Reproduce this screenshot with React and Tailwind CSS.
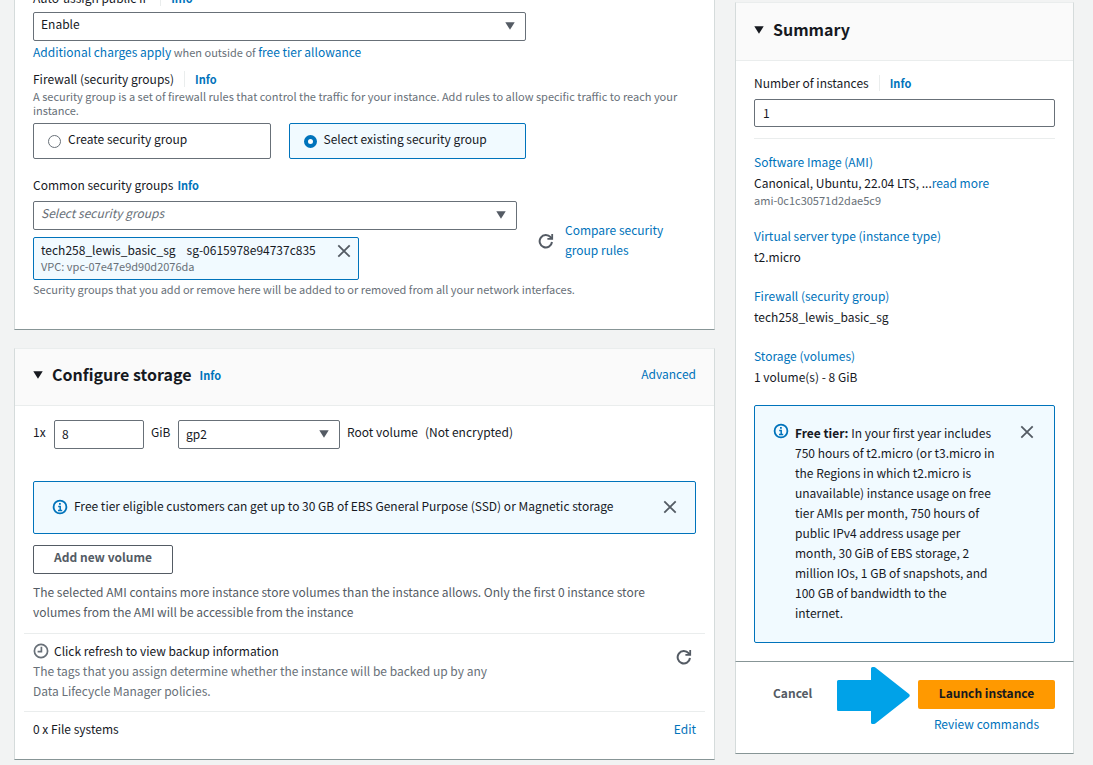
import React from "react";

function Caret({ className = "" }) {
  return (
    <svg viewBox="0 0 10 8" className={`h-2 w-2.5 shrink-0 fill-current ${className}`} aria-hidden="true">
      <path d="M0.3 0.3h9.4L5 7.8z" />
    </svg>
  );
}

function CloseIcon() {
  return (
    <svg viewBox="0 0 14 14" className="size-3.5" fill="none" stroke="#545b64" strokeWidth="1.8" aria-hidden="true">
      <path d="M1.3 1.3l11.4 11.4M12.7 1.3L1.3 12.7" />
    </svg>
  );
}

function RefreshIcon() {
  return (
    <svg viewBox="0 0 16 16" className="size-4" fill="none" stroke="#545b64" strokeWidth="2" aria-hidden="true">
      <path d="M14 9A6.200 6.200 0 1 1 12.600 4.200L14.200 5.600" />
      <path d="M14.200 1v4.900H9.400" strokeWidth="1.800" />
    </svg>
  );
}

function InfoIcon() {
  return (
    <svg viewBox="0 0 16 16" className="size-4 shrink-0" fill="none" stroke="#0073bb" aria-hidden="true">
      <circle cx="8" cy="8" r="6.4" strokeWidth="1.8" />
      <path d="M6.2 7.4h2v3.8M6 11.4h4.2" strokeWidth="1.5" />
      <path d="M7 4.9h1.8" strokeWidth="1.7" />
    </svg>
  );
}

function ClockIcon() {
  return (
    <svg viewBox="0 0 16 16" className="size-4 shrink-0" fill="none" stroke="#687078" aria-hidden="true">
      <circle cx="8" cy="8" r="6.6" strokeWidth="1.7" />
      <path d="M8.4 3.8v4.8H4.6" strokeWidth="1.7" />
    </svg>
  );
}

function Link({ children, className = "" }) {
  return (
    <a href="#" className={`text-[#0073bb] ${className}`}>
      {children}
    </a>
  );
}

function Info({ divided = false }) {
  return (
    <a
      href="#"
      className={
        divided
          ? "ml-2.5 border-l border-[#eaeded] pl-2.5 text-[11px] leading-4 font-bold text-[#0073bb]"
          : "text-[11px] leading-4 font-bold text-[#0073bb]"
      }
    >
      Info
    </a>
  );
}

function Select({ id, label, value, className = "", selectClass = "pb-1.5" }) {
  return (
    <div className={`relative ${className}`}>
      <select
        id={id}
        aria-label={label}
        className={`block h-[29px] w-full appearance-none rounded-xs border border-[#687078] bg-white pr-7 pl-[7px] ${selectClass}`}
      >
        <option>{value}</option>
      </select>
      <Caret className="pointer-events-none absolute top-2.5 right-[11px] text-[#545b64]" />
    </div>
  );
}

function Tile({ label, selected = false }) {
  return (
    <label
      className={
        selected
          ? "flex h-9 flex-1 items-center gap-[7px] rounded-xs border border-[#0073bb] bg-[#f1faff] px-3.5"
          : "flex h-9 flex-1 items-center gap-[7px] rounded-xs border border-[#687078] bg-white px-3.5"
      }
    >
      <input
        type="radio"
        name="firewall"
        defaultChecked={selected}
        className="size-[13px] appearance-none rounded-full border border-[#687078] bg-white checked:border-4 checked:border-[#0073bb]"
      />
      <span className="pb-1">{label}</span>
    </label>
  );
}

const CARD = "border border-t-[#eaeded] border-r-[#d5dbdb] border-b-[#879596] border-l-[#d5dbdb] bg-white";

function NetworkCard() {
  return (
    <section className={`${CARD} -mt-[13px] px-[18px] pb-8`}>
      <div className="flex items-center">
        <label htmlFor="public-ip">Auto-assign public IP</label>
        <Info divided />
      </div>
      <Select id="public-ip" value="Enable" className="mt-1 w-[493px]" />
      <p className="mt-px text-[11px] leading-5 text-[#687078]">
        <Link className="text-[12px]">Additional charges apply</Link> when outside of{" "}
        <Link className="text-[12px]">free tier allowance</Link>
      </p>
      <div className="mt-[7px] flex items-center">
        <span>Firewall (security groups)</span>
        <Info divided />
      </div>
      <p className="w-[655px] text-[11px] leading-[14px] text-[#687078]">
        A security group is a set of firewall rules that control the traffic for your instance. Add rules to allow
        specific traffic to reach your instance.
      </p>
      <div className="mt-1.5 flex w-[493px] gap-[18px]">
        <Tile label="Create security group" />
        <Tile label="Select existing security group" selected />
      </div>
      <div className="mt-4 flex items-center gap-1">
        <label htmlFor="groups">Common security groups</label>
        <Info />
      </div>
      <div className="mt-1.5 flex items-center">
        <div className="w-[484px]">
          <Select id="groups" value="Select security groups" selectClass="pb-1.5 italic text-[#687078]" />
          <div className="mt-[7px] flex h-[43px] w-[326px] items-start justify-between rounded-xs border border-[#0073bb] bg-[#f1faff] px-[7px] pt-[3px]">
            <div>
              <p className="flex gap-[11px] leading-[18px]">
                <span>tech258_lewis_basic_sg</span>
                <span>sg-0615978e94737c835</span>
              </p>
              <p className="text-[11px] leading-[14px] text-[#687078]">VPC: vpc-07e47e9d90d2076da</p>
            </div>
            <button type="button" aria-label="Remove security group" className="mt-[3px]">
              <CloseIcon />
            </button>
          </div>
        </div>
        <button type="button" aria-label="Refresh security groups" className="ml-[21px]">
          <RefreshIcon />
        </button>
        <Link className="ml-[11px] w-[110px] pb-0.5">Compare security group rules</Link>
      </div>
      <p className="mt-px text-[11px] leading-4 text-[#687078]">
        Security groups that you add or remove here will be added to or removed from all your network interfaces.
      </p>
    </section>
  );
}

function StorageCard() {
  return (
    <section className={CARD}>
      <header className="flex h-[57px] items-center border-b border-[#eaeded] bg-[#fafafa] px-[18px] pb-1">
        <Caret />
        <h2 className="ml-[9px] pb-0.5 text-[16px] leading-5 font-bold">Configure storage</h2>
        <span className="ml-2">
          <Info />
        </span>
        <Link className="ml-auto pb-0.5">Advanced</Link>
      </header>
      <div className="px-[18px] pt-3.5">
        <div className="flex items-start">
          <label htmlFor="size" className="w-[21px] pt-0.5">1x</label>
          <input
            id="size"
            defaultValue="8"
            className="h-[29px] w-[90px] rounded-xs border border-[#687078] px-[7px] pb-0.5"
          />
          <span className="w-[34px] pt-0.5 pl-[7px]">GiB</span>
          <Select label="Volume type" value="gp2" className="w-[162px]" selectClass="pb-0.5" />
          <span className="pt-0.5 pl-[7px]">Root volume</span>
          <span className="pt-0.5 pl-[7px]">(Not encrypted)</span>
        </div>
        <div className="mt-8 flex h-[53px] items-center rounded-xs border border-[#0073bb] bg-[#f1faff] px-[18px] pb-0.5">
          <InfoIcon />
          <p className="ml-1.5 pb-px">
            Free tier eligible customers can get up to 30 GB of EBS General Purpose (SSD) or Magnetic storage
          </p>
          <button type="button" aria-label="Dismiss" className="ml-auto">
            <CloseIcon />
          </button>
        </div>
        <button
          type="button"
          className="mt-[11px] block h-[29px] w-[140px] rounded-xs border border-[#545b64] pb-1.5 font-bold text-[#545b64]"
        >
          Add new volume
        </button>
        <p className="mt-2 w-[650px] text-[#545b64]">
          The selected AMI contains more instance store volumes than the instance allows. Only the first 0 instance
          store volumes from the AMI will be accessible from the instance
        </p>
      </div>
      <div className="mx-[9px] mt-[11px] flex items-start justify-between border-t border-[#eaeded] px-[9px] pt-[7px] pb-2.5">
        <div className="w-[475px]">
          <p className="flex items-center gap-[5px]">
            <ClockIcon />
            Click refresh to view backup information
          </p>
          <p className="text-[#687078]">
            The tags that you assign determine whether the instance will be backed up by any Data Lifecycle Manager
            policies.
          </p>
        </div>
        <button type="button" aria-label="Refresh backup information" className="mt-2 mr-1">
          <RefreshIcon />
        </button>
      </div>
      <div className="mx-[9px] flex justify-between border-t border-[#eaeded] px-[9px] pt-[7px] pb-5">
        <span>0 x File systems</span>
        <Link>Edit</Link>
      </div>
    </section>
  );
}

function SummaryItem({ title, children }) {
  return (
    <div>
      <Link className="block">{title}</Link>
      <div className="mt-px">{children}</div>
    </div>
  );
}

function Summary() {
  return (
    <aside className="mt-0.5 w-[339px] shrink-0 self-start">
      <section className={CARD}>
        <header className="flex h-[58px] items-center border-b border-[#eaeded] bg-[#fafafa] px-[18px] pb-1">
          <Caret />
          <h2 className="ml-[9px] pb-0.5 text-[16px] leading-5 font-bold">Summary</h2>
        </header>
        <div className="px-[18px] pt-3 pb-[18px]">
          <div className="flex items-center">
            <label htmlFor="count">Number of instances</label>
            <Info divided />
          </div>
          <input
            id="count"
            defaultValue="1"
            className="mt-1.5 block h-7 w-full rounded-xs border border-[#687078] px-2 pb-0.5"
          />
          <div className="mt-[11px] flex flex-col gap-[19px] border-t border-[#eaeded] pt-[13px]">
            <div>
              <Link className="block">Software Image (AMI)</Link>
              <p className="mt-px">
                Canonical, Ubuntu, 22.04 LTS, ...<Link>read more</Link>
              </p>
              <p className="text-[11px] leading-[14px] text-[#687078]">ami-0c1c30571d2dae5c9</p>
            </div>
            <SummaryItem title="Virtual server type (instance type)">t2.micro</SummaryItem>
            <SummaryItem title="Firewall (security group)">tech258_lewis_basic_sg</SummaryItem>
            <SummaryItem title="Storage (volumes)">1 volume(s) - 8 GiB</SummaryItem>
          </div>
          <div className="mt-[18px] flex items-start rounded-xs border border-[#0073bb] bg-[#f1faff] px-[18px] pt-[17px] pb-[19px]">
            <InfoIcon />
            <p className="ml-1.5 w-[204px]">
              <b>Free tier:</b> In your first year includes 750 hours of t2.micro (or t3.micro in the Regions in which
              t2.micro is unavailable) instance usage on free tier AMIs per month, 750 hours of public IPv4 address
              usage per month, 30 GiB of EBS storage, 2 million IOs, 1 GB of snapshots, and 100 GB of bandwidth to the
              <br />
              internet.
            </p>
            <button type="button" aria-label="Dismiss" className="mt-0.5 mr-0.5 ml-auto">
              <CloseIcon />
            </button>
          </div>
        </div>
      </section>
      <footer className="relative flex items-start justify-between border border-t-0 border-r-[#d5dbdb] border-b-[#879596] border-l-[#d5dbdb] bg-white pt-[18px] pr-[18px] pb-[19px] pl-[37px]">
        <button type="button" className="h-[29px] pb-1 font-bold text-[#545b64]">
          Cancel
        </button>
        <div className="flex flex-col items-center gap-[5px]">
          <button
            type="button"
            className="h-[29px] w-[137px] rounded-xs bg-[#ff9900] pb-1 font-bold text-[#16191f]"
          >
            Launch instance
          </button>
          <Link>Review commands</Link>
        </div>
        <svg viewBox="0 0 73 57" className="absolute top-[5px] right-[163px] h-[57px] w-[73px]" aria-hidden="true">
          <path
            d="M1.500 13H34V1.500Q34 0 35.500 0H37q1 0 2 1l33 26q1.500 1.500 0 3L39 56q-1 1-2 1h-1.500Q34 57 34 55.500V44H1.500Q0 44 0 42.500V14.500Q0 13 1.500 13z"
            fill="#00a2e8"
          />
        </svg>
      </footer>
    </aside>
  );
}

export default function App() {
  return (
    <div className="flex min-h-screen items-start gap-5 overflow-hidden bg-[#f2f3f3] pr-[19px] pl-3.5 font-['Noto_Sans_CJK_JP',sans-serif] text-[12px] leading-5 text-[#16191f]">
      <main className="flex min-w-0 flex-1 flex-col gap-[18px]">
        <NetworkCard />
        <StorageCard />
      </main>
      <Summary />
    </div>
  );
}
